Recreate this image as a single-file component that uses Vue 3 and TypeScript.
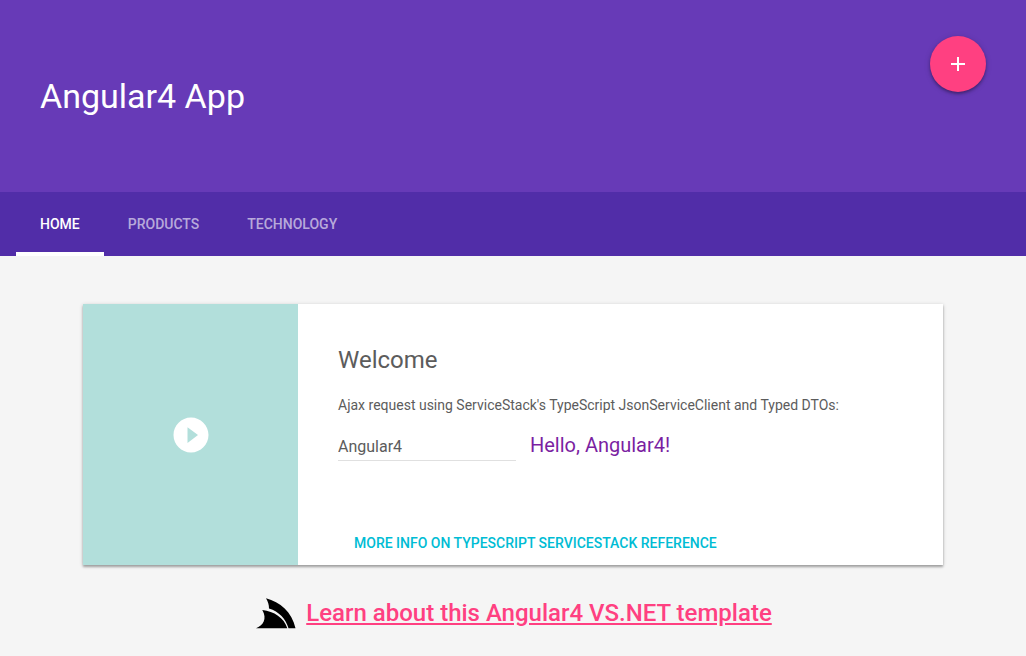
<script setup lang="ts">
import { ref } from 'vue'

const tabs = ['Home', 'Products', 'Technology']
const active = ref('Home')
const name = ref('Angular4')
</script>

<template>
  <div class="layout">
    <header class="header">
      <h1>Angular4 App</h1>
      <button class="fab" type="button" aria-label="Add">
        <svg viewBox="0 0 24 24" width="24" height="24"><path fill="currentColor" d="M19 13h-6v6h-2v-6H5v-2h6V5h2v6h6z" /></svg>
      </button>
    </header>
    <nav class="tabs">
      <a v-for="tab in tabs" :key="tab" href="#" class="tab" :class="{ active: tab === active }" @click.prevent="active = tab">{{ tab }}</a>
    </nav>
    <main>
      <section class="card">
        <div class="media">
          <button class="play" type="button" aria-label="Play">
            <svg viewBox="0 0 24 24" width="42" height="42"><path fill="currentColor" d="M12 2C6.480 2 2 6.480 2 12s4.480 10 10 10 10-4.480 10-10S17.520 2 12 2zm-2 14.500v-9l6 4.500-6 4.500z" /></svg>
          </button>
        </div>
        <div class="body">
          <div class="content">
            <h4>Welcome</h4>
            <label for="name">Ajax request using ServiceStack's TypeScript JsonServiceClient and Typed DTOs:</label>
            <div class="row">
              <input id="name" v-model="name" type="text" />
              <output for="name">Hello, {{ name }}!</output>
            </div>
          </div>
          <div class="actions"><a href="#">More info on TypeScript ServiceStack Reference</a></div>
        </div>
      </section>
      <p class="learn">
        <svg viewBox="0 0 42 32" width="42" height="32" aria-hidden="true">
          <path d="M12 1.300C26 5 38 15 41.500 31.300H34.500C32 22 25 14.500 15 11.500C15 8 14 4.500 12 1.300Z" />
          <path d="M8.300 13C20 14.500 30 20.500 33.300 31.300H2C9 28.500 13.500 22 8.300 13Z" />
        </svg>
        <a href="#">Learn about this Angular4 VS.NET template</a>
      </p>
    </main>
  </div>
</template>

<style>
body {
  margin: 0;
  background: #f5f5f5;
}
</style>

<style scoped>
.layout {
  font-family: Roboto, 'Liberation Sans', sans-serif;
  color: #5c5c5c;
}
.header {
  box-sizing: border-box;
  height: 192px;
  padding: 0 40px;
  display: flex;
  align-items: center;
  justify-content: space-between;
  background: #673ab7;
  color: #fff;
}
h1 {
  margin: 0;
  font-size: 34px;
  line-height: 40px;
  font-weight: 400;
}
.fab {
  align-self: flex-start;
  margin-top: 36px;
  width: 56px;
  height: 56px;
  padding: 0;
  display: flex;
  align-items: center;
  justify-content: center;
  border: 0;
  border-radius: 50%;
  background: #ff4081;
  color: #fff;
  box-shadow: 0 2px 3px rgba(0, 0, 0, 0.3), 0 1px 6px rgba(0, 0, 0, 0.15);
}
.tabs {
  display: flex;
  height: 64px;
  padding-left: 16px;
  background: #512da8;
}
.tab {
  box-sizing: border-box;
  height: 64px;
  padding: 0 24px;
  line-height: 64px;
  font-size: 14px;
  font-weight: 500;
  text-transform: uppercase;
  text-decoration: none;
  color: rgba(255, 255, 255, 0.6);
}
.tab.active {
  color: #fff;
  border-bottom: 4px solid #fff;
}
main {
  padding: 48px 24px 24px;
}
.card {
  max-width: 860px;
  margin: 0 auto;
  display: grid;
  grid-template-columns: 1fr 3fr;
  background: #fff;
  box-shadow: 0 2px 2px rgba(0, 0, 0, 0.25), 0 1px 4px rgba(0, 0, 0, 0.2);
}
.media {
  display: grid;
  place-items: center;
  background: #b2dfdb;
}
.play {
  display: flex;
  padding: 0;
  border: 0;
  background: none;
  color: #fff;
}
.content {
  padding: 40px 40px 72px;
}
h4 {
  margin: 0 0 19px;
  font-size: 24px;
  line-height: 32px;
  font-weight: 400;
}
label {
  display: block;
  font-size: 14px;
  line-height: 20px;
}
.row {
  display: flex;
  gap: 14px;
  padding-top: 16px;
}
input {
  box-sizing: border-box;
  width: 178px;
  height: 30px;
  padding: 1px 0 0;
  border: 0;
  border-bottom: 1px solid #e0e0e0;
  font: 16px/28px Roboto, sans-serif;
  color: inherit;
  outline: 0;
  background: none;
}
output {
  font-size: 20px;
  line-height: 28px;
  color: #7b1fa2;
}
.actions {
  padding: 0 56px 12px;
  font-size: 14px;
  line-height: 20px;
}
.actions a {
  color: #00bcd4;
  font-weight: 500;
  text-transform: uppercase;
  text-decoration: none;
}
.learn {
  display: flex;
  justify-content: center;
  align-items: center;
  gap: 10px;
  margin: 32px 0 0;
  font-size: 24px;
  line-height: 32px;
}
.learn svg {
  fill: #000;
}
.learn a {
  color: #ff4081;
  font-weight: 500;
}
</style>
